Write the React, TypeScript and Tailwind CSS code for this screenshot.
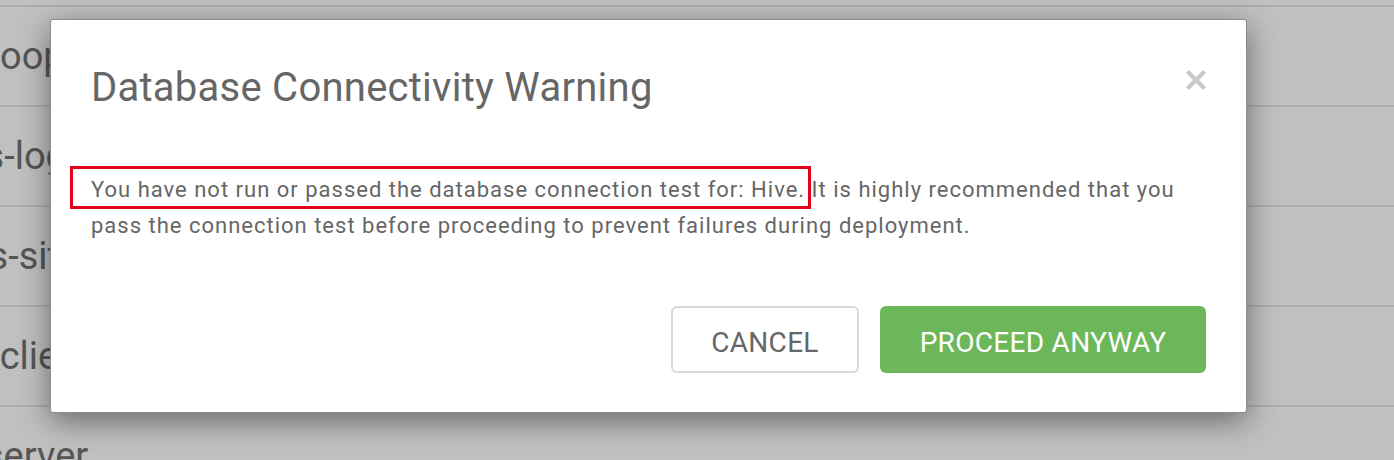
import React from "react"

const rows = [
  { text: "hadoop-env", shift: "-ml-[63px]" },
  { text: "hdfs-log4j", shift: "-ml-[71px]" },
  { text: "hdfs-site", shift: "-ml-[67px]" },
  { text: "hdfs-client", shift: "-ml-[86px]" },
  { text: "server", shift: "-ml-[16px]" },
]

function CloseIcon() {
  return (
    <svg width="20" height="20" viewBox="0 0 20 20">
      <path d="M1.5 1.5 L18.5 18.5 M18.5 1.5 L1.5 18.5" stroke="#c9c9c9" strokeWidth="4.2" />
    </svg>
  )
}

export default function App() {
  return (
    <div
      className="relative h-[460px] w-full overflow-hidden bg-[#c0c0c0]"
      style={{ fontFamily: "Roboto, 'Noto Sans', sans-serif" }}
    >
      {/* page behind the backdrop */}
      <div className="pt-[5px]">
        {rows.map((r) => (
          <div key={r.text} className="flex h-[100px] items-center border-t-2 border-[#adadad]">
            <span className={`${r.shift} whitespace-nowrap text-[38px] text-[#555]`}>{r.text}</span>
          </div>
        ))}
      </div>

      {/* modal */}
      <div className="absolute inset-0 pl-[50px] pt-[19px]">
        <div className="w-[1197px] rounded-[3px] border border-[#8c8c8c] bg-white px-[40px] pb-[39px] pt-[46px] shadow-[0_8px_30px_rgba(0,0,0,0.45)]">
          <div className="flex items-start justify-between">
            <h4 className="text-[40px] leading-[44px] tracking-[0.25px] text-[#666]">Database Connectivity Warning</h4>
            <button type="button" className="mt-[4px]">
              <CloseIcon />
            </button>
          </div>

          <p className="mt-[62px] text-[22px] leading-[36px] tracking-[1px] text-[#666]">
            <span className="relative">
              You have not run or passed the database connection test for: Hive.
              <span className="pointer-events-none absolute bottom-[-7px] left-[-21px] right-[-6px] top-[-11px] border-[3px] border-[#e2001a]" />
            </span>{" "}
            It is highly recommended that you pass the connection test before proceeding to prevent failures during
            deployment.
          </p>

          <div className="mt-[62px] flex justify-end gap-[21px]">
            <button
              type="button"
              className="h-[67px] w-[188px] rounded-[6px] border-2 border-[#d6d8dc] bg-white pt-[7px] text-[28px] tracking-[0.3px] text-[#666]"
            >
              CANCEL
            </button>
            <button
              type="button"
              className="h-[67px] w-[326px] rounded-[6px] bg-[#6cb75a] pt-[7px] text-[28px] tracking-[0.3px] text-white"
            >
              PROCEED ANYWAY
            </button>
          </div>
        </div>
      </div>
    </div>
  )
}
